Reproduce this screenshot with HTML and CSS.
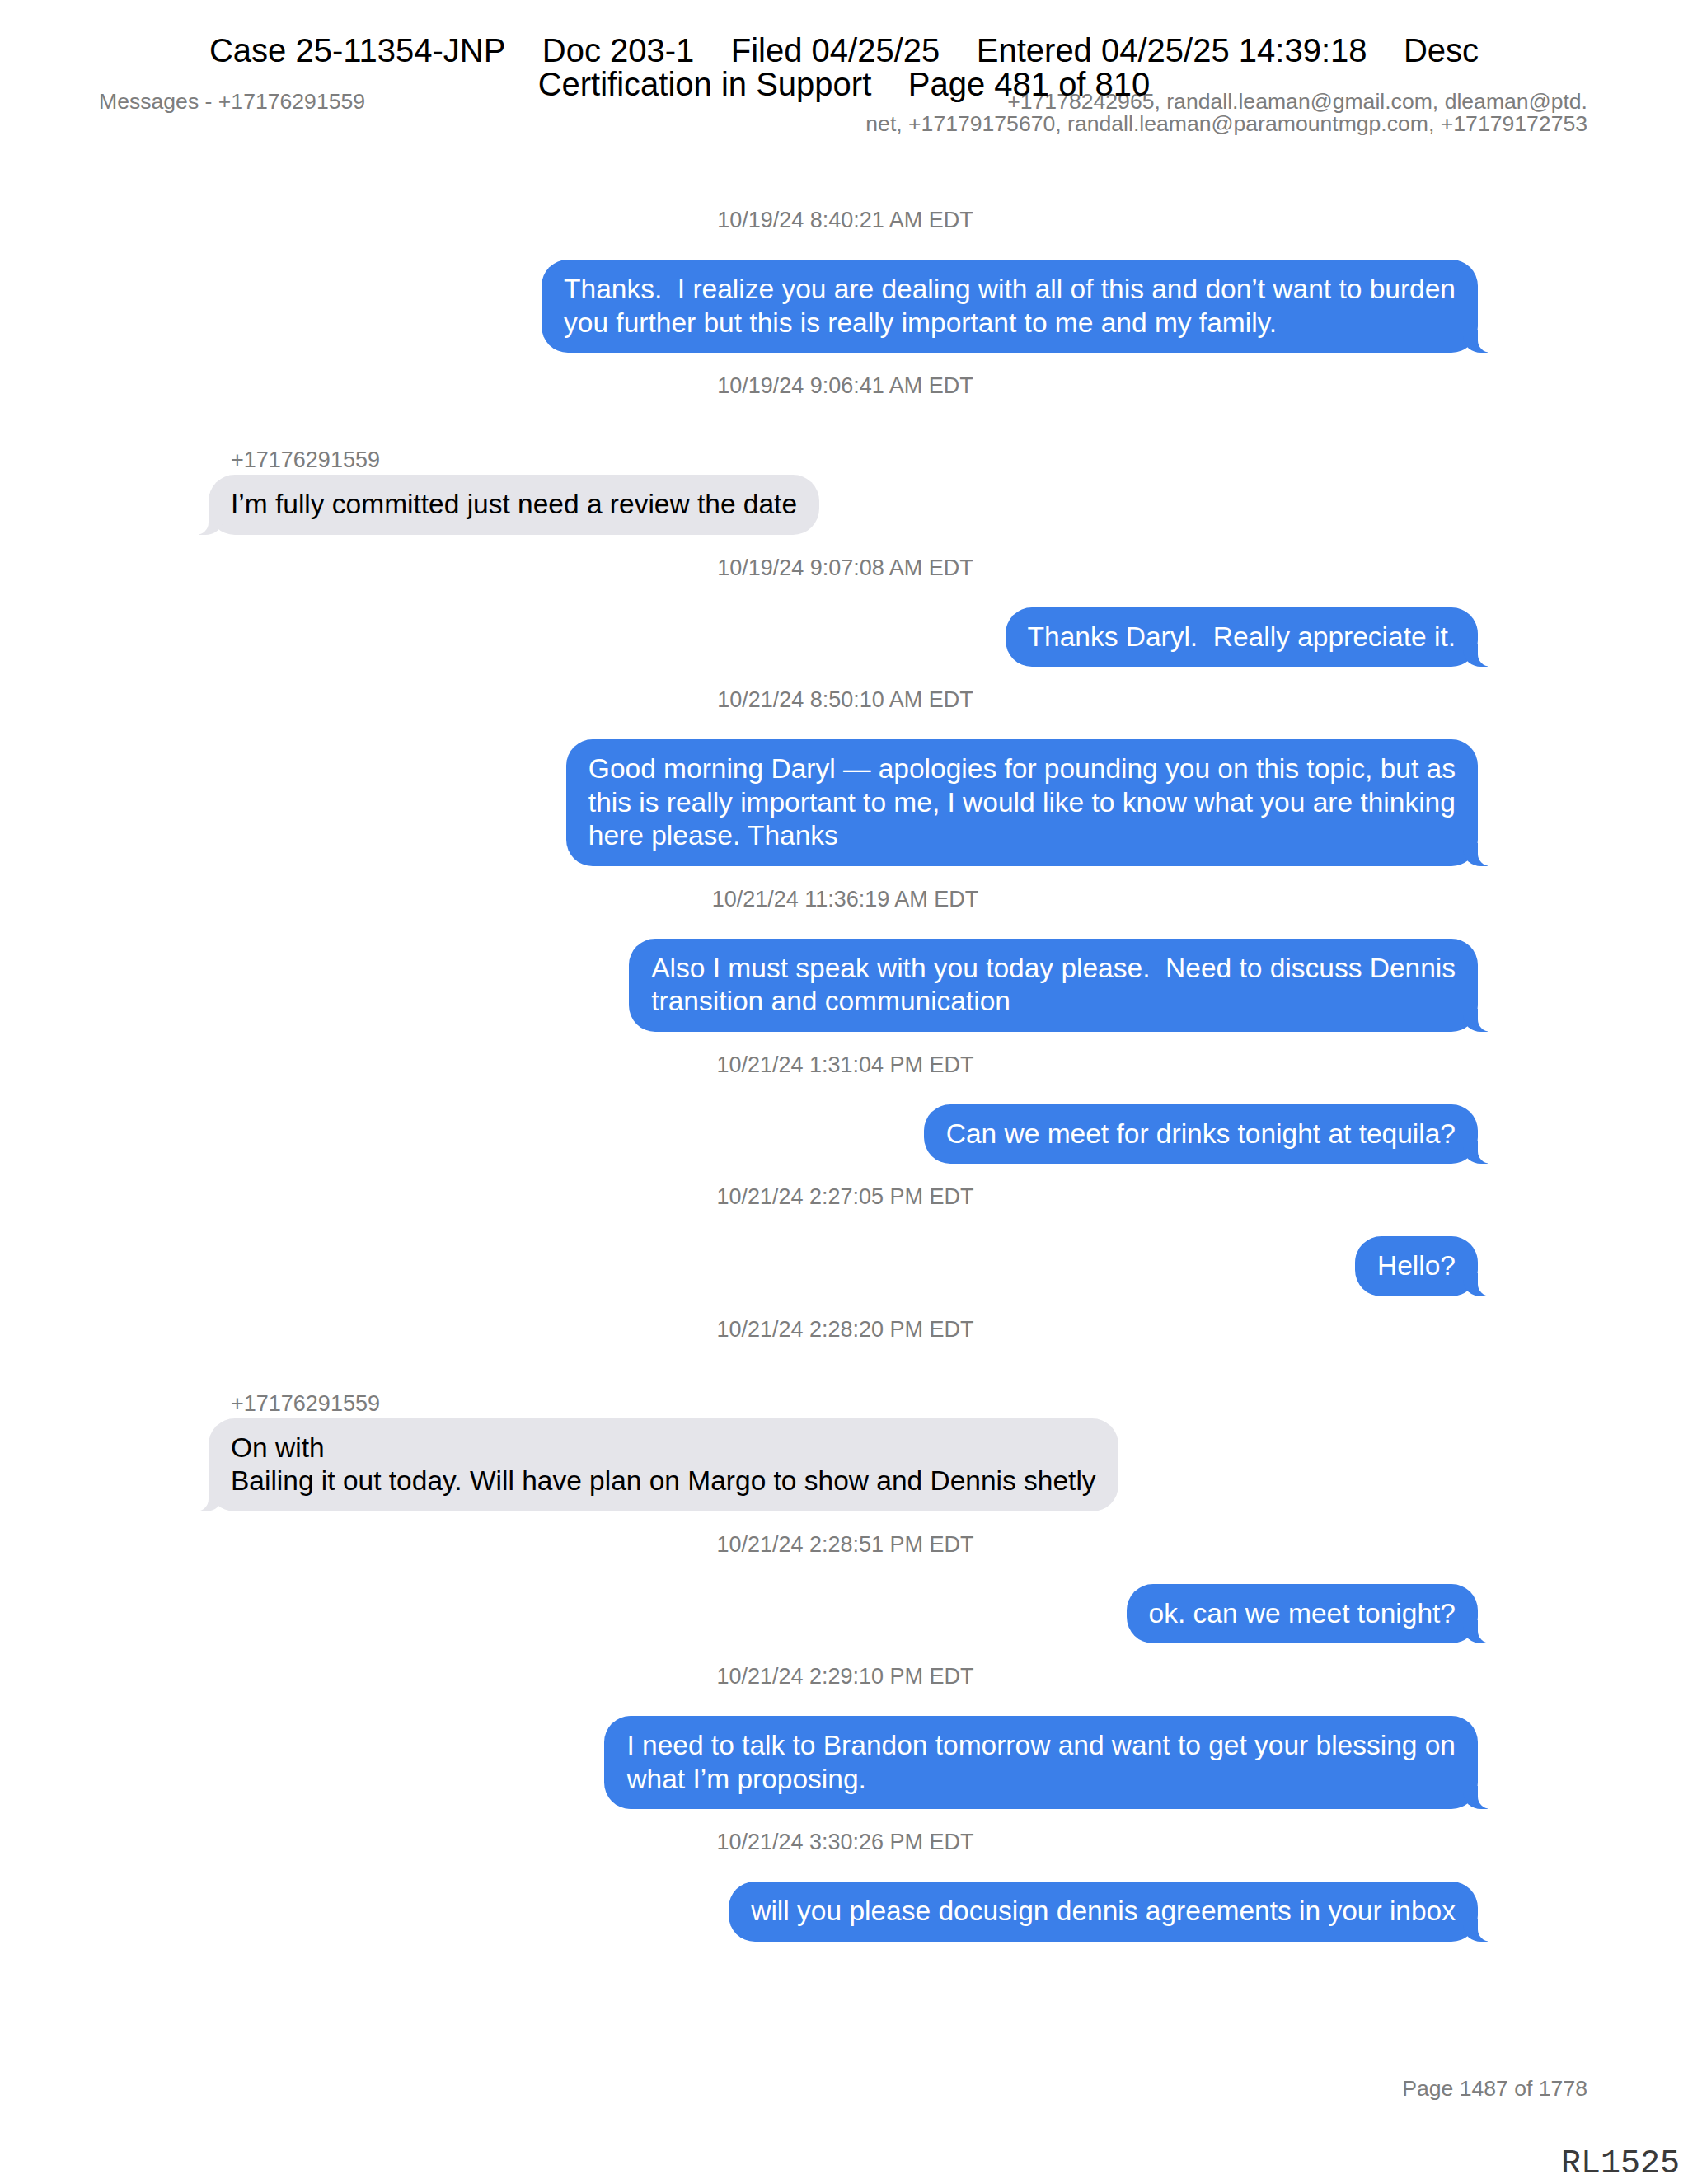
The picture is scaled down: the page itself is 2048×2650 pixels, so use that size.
FILE: index.html
```html
<!DOCTYPE html>
<html lang="en">
<head>
<meta charset="utf-8">
<title>Messages - +17176291559</title>
<link rel="stylesheet" href="styles.css">
</head>
<body>
<div class="page">
  <div class="stamp">
    <div class="stamp-line">Case 25-11354-JNP&nbsp;&nbsp;&nbsp;&nbsp;Doc 203-1&nbsp;&nbsp;&nbsp;&nbsp;Filed 04/25/25&nbsp;&nbsp;&nbsp;&nbsp;Entered 04/25/25 14:39:18&nbsp;&nbsp;&nbsp;&nbsp;Desc</div>
    <div class="stamp-line">Certification in Support&nbsp;&nbsp;&nbsp;&nbsp;Page 481 of 810</div>
  </div>

  <header class="doc-header">
    <div class="doc-title">Messages - +17176291559</div>
    <div class="doc-participants">+17178242965, randall.leaman@gmail.com, dleaman@ptd.<br>net, +17179175670, randall.leaman@paramountmgp.com, +17179172753</div>
  </header>

  <main class="chat">
    <div class="ts">10/19/24 8:40:21 AM EDT</div>
    <div class="row out"><div class="bubble">Thanks.&nbsp; I realize you are dealing with all of this and don’t want to burden<br>you further but this is really important to me and my family.</div></div>

    <div class="ts">10/19/24 9:06:41 AM EDT</div>
    <div class="sender">+17176291559</div>
    <div class="row in"><div class="bubble">I’m fully committed just need a review the date</div></div>

    <div class="ts">10/19/24 9:07:08 AM EDT</div>
    <div class="row out"><div class="bubble">Thanks Daryl.&nbsp; Really appreciate it.</div></div>

    <div class="ts">10/21/24 8:50:10 AM EDT</div>
    <div class="row out"><div class="bubble">Good morning Daryl — apologies for pounding you on this topic, but as<br>this is really important to me, I would like to know what you are thinking<br>here please. Thanks</div></div>

    <div class="ts">10/21/24 11:36:19 AM EDT</div>
    <div class="row out"><div class="bubble">Also I must speak with you today please.&nbsp; Need to discuss Dennis<br>transition and communication</div></div>

    <div class="ts">10/21/24 1:31:04 PM EDT</div>
    <div class="row out"><div class="bubble">Can we meet for drinks tonight at tequila?</div></div>

    <div class="ts">10/21/24 2:27:05 PM EDT</div>
    <div class="row out"><div class="bubble">Hello?</div></div>

    <div class="ts">10/21/24 2:28:20 PM EDT</div>
    <div class="sender">+17176291559</div>
    <div class="row in"><div class="bubble">On with<br>Bailing it out today. Will have plan on Margo to show and Dennis shetly</div></div>

    <div class="ts">10/21/24 2:28:51 PM EDT</div>
    <div class="row out"><div class="bubble">ok. can we meet tonight?</div></div>

    <div class="ts">10/21/24 2:29:10 PM EDT</div>
    <div class="row out"><div class="bubble">I need to talk to Brandon tomorrow and want to get your blessing on<br>what I’m proposing.</div></div>

    <div class="ts">10/21/24 3:30:26 PM EDT</div>
    <div class="row out"><div class="bubble">will you please docusign dennis agreements in your inbox</div></div>
  </main>

  <footer class="doc-footer">
    <div class="page-num">Page 1487 of 1778</div>
    <div class="bates">RL1525</div>
  </footer>
</div>
</body>
</html>
```

FILE: styles.css
```css
html, body {
  margin: 0;
  padding: 0;
  background: #ffffff;
}

body {
  font-family: "Liberation Sans", Arial, sans-serif;
}

.page {
  position: relative;
  width: 2048px;
  height: 2650px;
  overflow: hidden;
}

/* court filing stamp overlaid on the page */
.stamp {
  position: absolute;
  top: 41px;
  left: 0;
  right: 0;
  text-align: center;
  font-size: 40px;
  line-height: 40.5px;
  color: #000000;
  z-index: 5;
}

.stamp-line {
  white-space: nowrap;
}

.doc-header {
  display: flex;
  justify-content: space-between;
  align-items: flex-start;
  padding: 110px 122px 0 120px;
  font-size: 26.6px;
  line-height: 27px;
  color: #7d7d7d;
}

.doc-participants {
  text-align: right;
}

.chat {
  display: flex;
  flex-direction: column;
  margin-left: 253px;
  width: 1540px;
  padding-top: 63px;
}

.ts {
  margin: 25px 0 33px;
  padding-left: 5px;
  text-align: center;
  font-size: 27px;
  line-height: 30px;
  color: #7d7d7d;
}

.sender {
  margin: 27px 0 3px;
  padding-left: 27px;
  font-size: 27px;
  line-height: 30px;
  color: #7d7d7d;
}

.row {
  display: flex;
}

.row.out {
  justify-content: flex-end;
}

.row.in {
  justify-content: flex-start;
}

.bubble {
  position: relative;
  padding: 16px 27px;
  border-radius: 32px;
  font-size: 33.5px;
  line-height: 40.5px;
  white-space: nowrap;
}

.out .bubble {
  background: #3b7fe9;
  color: #ffffff;
}

.in .bubble {
  background: #e5e5ea;
  color: #000000;
}

.bubble::before,
.bubble::after {
  content: "";
  position: absolute;
  bottom: 0;
  height: 28px;
}

.out .bubble::before {
  right: -12px;
  width: 30px;
  background: #3b7fe9;
  border-bottom-left-radius: 22px 20px;
}

.out .bubble::after {
  right: -17px;
  width: 17px;
  background: #ffffff;
  border-bottom-left-radius: 15px;
}

.in .bubble::before {
  left: -12px;
  width: 30px;
  background: #e5e5ea;
  border-bottom-right-radius: 22px 20px;
}

.in .bubble::after {
  left: -17px;
  width: 17px;
  background: #ffffff;
  border-bottom-right-radius: 15px;
}

.doc-footer {
  display: flex;
  flex-direction: column;
  align-items: flex-end;
  margin-top: 163px;
}

.page-num {
  margin-right: 122px;
  font-size: 26.6px;
  line-height: 30px;
  color: #7d7d7d;
}

.bates {
  margin-top: 57px;
  margin-right: 10px;
  font-family: "Liberation Mono", "Courier New", monospace;
  font-size: 40px;
  line-height: 40px;
  color: #3a3a3a;
}
```
